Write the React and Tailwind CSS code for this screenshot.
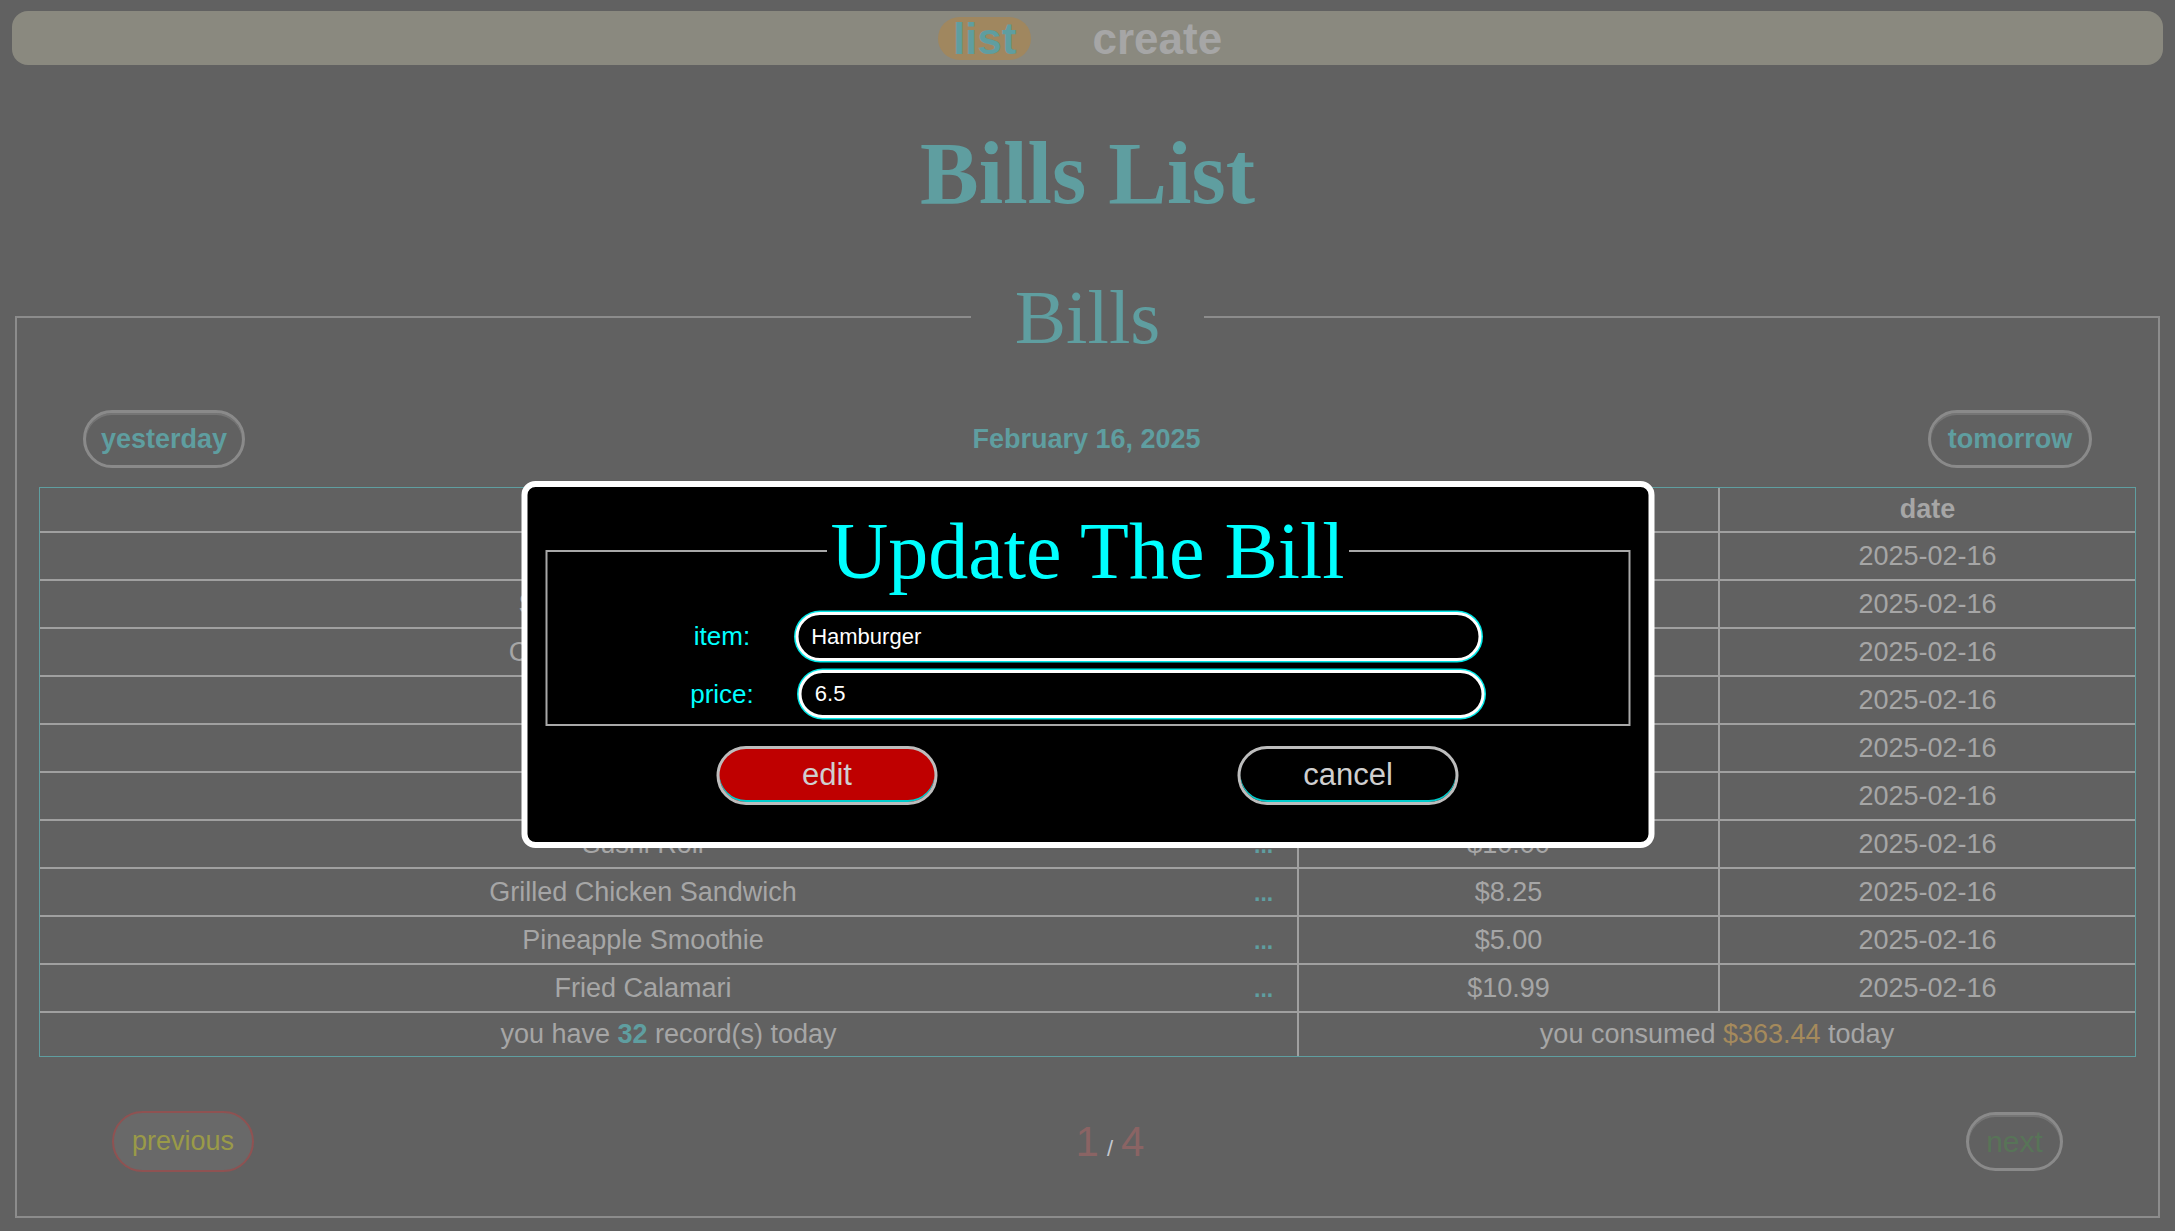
import React from 'react'

const teal = 'text-[#5f9ea0]'

const rows = [
  ['Hamburger', '$6.50'],
  ['Spaghetti Carbonara', '$12.99'],
  ['Chicken Caesar Salad', '$9.75'],
  ['French Fries', '$3.50'],
  ['Iced Latte', '$4.25'],
  ['Margherita Pizza', '$11.50'],
  ['Sushi Roll', '$10.00'],
  ['Grilled Chicken Sandwich', '$8.25'],
  ['Pineapple Smoothie', '$5.00'],
  ['Fried Calamari', '$10.99'],
]

const cell = 'border-2 border-[#a0a0a0] text-center p-0'

function UpdateModal() {
  return (
    <div className="absolute top-[481px] left-1/2 -translate-x-1/2 w-[1133px] bg-black border-[6px] border-white rounded-[14px] px-[18px] pt-[24px] pb-[37px]">
      <fieldset className="border-2 border-[#a8a8a8] pb-[6px]">
        <legend className="mx-auto px-[4px] text-[80px] leading-[80px] text-[#00ffff] font-['Liberation_Serif',serif]">
          Update The Bill
        </legend>
        <div className="pt-[21px] flex flex-col gap-[9px] text-[26px]">
          <div className="flex items-center justify-center gap-[45px]">
            <label className="text-[#00ffff]">item:</label>
            <input
              defaultValue="Hamburger"
              className="w-[686px] h-[49px] rounded-full bg-black border-[3px] border-white shadow-[0_0_0_1.5px_#00e8e8] text-white text-[22px] pl-[13px] outline-none"
            />
          </div>
          <div className="flex items-center justify-center gap-[45px]">
            <label className="text-[#00ffff]">price:</label>
            <input
              defaultValue="6.5"
              className="w-[686px] h-[48px] rounded-full bg-black border-[3px] border-white shadow-[0_0_0_1.5px_#00e8e8] text-white text-[22px] pl-[13px] outline-none"
            />
          </div>
        </div>
      </fieldset>
      <div className="mt-[20px] flex justify-center gap-[300px]">
        <button className="w-[221px] h-[59px] rounded-full bg-[#bf0000] border-[3px] border-[#bdbdbd] shadow-[inset_0_-2px_0_#00cccc] text-[31px] text-[#cfcfcf]">
          edit
        </button>
        <button className="w-[221px] h-[59px] rounded-full bg-black border-[3px] border-[#bdbdbd] shadow-[inset_0_-2px_0_#00cccc] text-[31px] text-[#cfcfcf]">
          cancel
        </button>
      </div>
    </div>
  )
}

export default function App() {
  return (
    <div className="relative min-h-screen bg-[#616161] pt-[11px] pb-[10px] font-['Liberation_Sans',Arial,sans-serif]">
      <nav className="mx-[12px] h-[54px] rounded-[16px] bg-[#8a897f] flex items-center justify-center gap-[46px]">
        <a className={`px-[15px] h-[43px] leading-[43px] rounded-full bg-[#a0875f] ${teal} font-bold text-[44px]`}>list</a>
        <a className="px-[15px] h-[43px] leading-[43px] text-[#a6a6a6] font-bold text-[44px]">create</a>
      </nav>

      <h1 className={`mt-[59px] text-center text-[88px] leading-[100px] font-bold ${teal} font-['Liberation_Serif',serif]`}>
        Bills List
      </h1>

      <fieldset className="mx-[15px] mt-[47px] border-2 border-[#8c8c8c] px-[22px] pb-[43px]">
        <legend className={`mx-auto px-[44px] text-[77px] leading-[92px] ${teal} font-['Liberation_Serif',serif]`}>
          Bills
        </legend>

        <div className="mt-[47px] px-[44px] flex items-center justify-between">
          <button className={`w-[162px] h-[58px] rounded-full border-[3px] border-[#8a8a8a] shadow-[inset_0_2px_0_#757575] text-[27px] font-bold ${teal}`}>
            yesterday
          </button>
          <span className={`text-[27px] font-bold ${teal}`}>February 16, 2025</span>
          <button className={`w-[164px] h-[58px] rounded-full border-[3px] border-[#8a8a8a] shadow-[inset_0_2px_0_#757575] text-[27px] font-bold ${teal}`}>
            tomorrow
          </button>
        </div>

        <div className="mt-[19px] border border-[#5f9ea0]">
          <table className="w-full table-fixed border-collapse border-hidden text-[27px] text-[#a6a6a6]">
            <colgroup>
              <col className="w-[1206px]" />
              <col className="w-[52px]" />
              <col className="w-[421px]" />
              <col />
            </colgroup>
            <thead>
              <tr className="h-[44px]">
                <th colSpan={2} className={cell}>item</th>
                <th className={cell}>price</th>
                <th className={cell}>date</th>
              </tr>
            </thead>
            <tbody>
              {rows.map(([name, price]) => (
                <tr key={name} className="h-[48px]">
                  <td className="border-2 border-r-0 border-[#a0a0a0] text-center p-0">{name}</td>
                  <td className="border-2 border-l-0 border-[#a0a0a0] p-0 text-left">
                    <span className={`text-[23px] font-bold ${teal} pl-[8px]`}>...</span>
                  </td>
                  <td className={cell}>{price}</td>
                  <td className={cell}>2025-02-16</td>
                </tr>
              ))}
              <tr className="h-[44px]">
                <td colSpan={2} className={cell}>
                  you have <span className={`font-bold ${teal}`}>32</span> record(s) today
                </td>
                <td colSpan={2} className={cell}>
                  you consumed <span className="text-[#a58a5c]">$363.44</span> today
                </td>
              </tr>
            </tbody>
          </table>
        </div>

        <div className="mt-[53px] px-[73px] flex items-center justify-between">
          <button className="w-[142px] h-[61px] rounded-full bg-[#696969] border-2 border-[#8f5252] text-[27px] text-[#9a9a48]">
            previous
          </button>
          <div className="flex items-baseline text-[#8a6464]">
            <span className="text-[42px]">1</span>
            <span className="text-[22px] text-[#c4c8d0] mx-[8px]">/</span>
            <span className="text-[42px]">4</span>
          </div>
          <button className="w-[97px] h-[59px] rounded-full border-[3px] border-[#8a8a8a] shadow-[inset_0_2px_0_#757575] text-[30px] text-[#587458]">
            next
          </button>
        </div>
      </fieldset>

      <UpdateModal />
    </div>
  )
}
